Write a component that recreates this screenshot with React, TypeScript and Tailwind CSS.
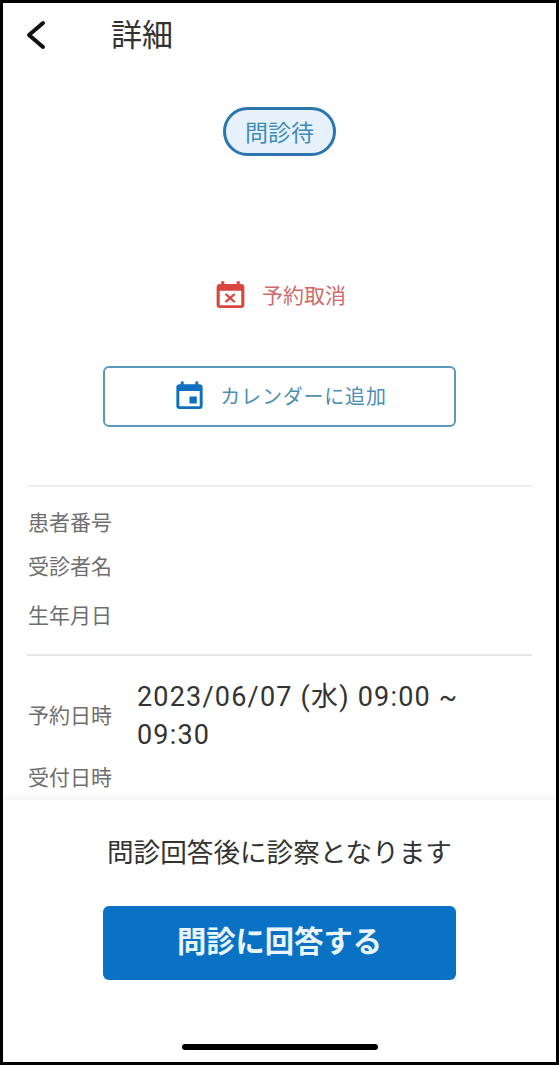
const jp = "font-['Roboto','Noto_Sans_CJK_JP',sans-serif]";

function InfoLabel({ children, className }: { children: string; className?: string }) {
  return <div className={`w-[84px] shrink-0 text-[21px] leading-[30px] text-[#6e6e6e] ${className ?? ""}`}>{children}</div>;
}

export default function App() {
  return (
    <div className={`${jp} box-border flex h-[1065px] w-[559px] flex-col overflow-hidden border-[3px] border-black bg-white`}>
      {/* header */}
      <div className="flex h-[64px] shrink-0 items-center pl-[22px]">
        <svg width="22" height="30" viewBox="0 0 22 30" fill="none" className="shrink-0">
          <path d="M18 3 L4 15 L18 27" stroke="#111" strokeWidth="4" strokeLinecap="round" strokeLinejoin="round" />
        </svg>
        <div className="ml-[64px] text-[31px] leading-none text-[#333]">詳細</div>
      </div>

      <div className="min-h-0 flex-1 overflow-hidden">
        <div className="mt-[40px] flex justify-center">
          <div className="flex h-[49px] w-[113px] items-center justify-center rounded-full border-[3px] border-[#2a76ad] bg-[#e6f1fb] pt-[4px] text-[23px] leading-none text-[#3f8cb8]">
            問診待
          </div>
        </div>

        {/* cancel */}
        <div className="mt-[124px] flex items-center justify-center gap-[13px] pr-[1px]">
          <svg width="37" height="32" viewBox="0 0 24 24" fill="#d9453f" preserveAspectRatio="none" className="shrink-0">
            <path d="M9.31 17l2.44-2.44L14.19 17l1.06-1.06-2.44-2.44 2.44-2.44L14.19 10l-2.44 2.44L9.31 10l-1.06 1.06 2.44 2.44-2.44 2.44L9.31 17zM19 3h-1V1h-2v2H8V1H6v2H5c-1.11 0-1.99.9-1.99 2L3 19c0 1.1.89 2 2 2h14c1.1 0 2-.9 2-2V5c0-1.1-.9-2-2-2zm0 16H5V8h14v11z" />
          </svg>
          <div className="text-[21px] leading-none text-[#cf6a68]">予約取消</div>
        </div>

        {/* calendar button */}
        <div className="mx-[100px] mt-[54px] flex h-[61px] items-center justify-center gap-[13px] rounded-[6px] border-2 border-[#5a9abf]">
          <svg width="35" height="33" viewBox="0 0 24 24" fill="#0f6fc0" preserveAspectRatio="none" className="shrink-0">
            <path d="M17 12h-5v5h5v-5zM16 1v2H8V1H6v2H5c-1.11 0-1.99.9-1.99 2L3 19c0 1.1.89 2 2 2h14c1.1 0 2-.9 2-2V5c0-1.1-.9-2-2-2h-1V1h-2zm3 18H5V8h14v11z" />
          </svg>
          <div className="text-[20px] leading-none tracking-[0.8px] text-[#4d8fb3]">カレンダーに追加</div>
        </div>

        <div className="mx-[24px] mt-[58px] h-[2px] bg-[#efefef]" />

        {/* patient */}
        <div className="mx-[25px] mt-[21px] flex flex-col">
          <InfoLabel>患者番号</InfoLabel>
          <InfoLabel className="mt-[14px]">受診者名</InfoLabel>
          <InfoLabel className="mt-[19px]">生年月日</InfoLabel>
        </div>

        <div className="mx-[24px] mt-[23px] h-[2px] bg-[#e6e6e6]" />

        {/* reservation */}
        <div className="mx-[25px] mt-[22px] flex items-center gap-[25px]">
          <InfoLabel>予約日時</InfoLabel>
          <div className="w-[345px] text-[27px] leading-[38px] tracking-[1.2px] text-[#333]">
            2023/06/07 (水) 09:00 ~ 09:30
          </div>
        </div>
        <div className="mx-[25px] mt-[9px]">
          <InfoLabel>受付日時</InfoLabel>
        </div>
      </div>

      {/* footer */}
      <div className="relative flex h-[262px] shrink-0 flex-col items-center bg-white pt-[34px] shadow-[0_-3px_6px_rgba(0,0,0,0.05)]">
        <div className="text-[26.6px] leading-[38px] text-[#333]">問診回答後に診察となります</div>
        <button className="mt-[34px] h-[74px] w-[353px] shrink-0 rounded-[6px] bg-[#0a72c4] text-[29.3px] font-bold text-[#e9f4fb]">
          問診に回答する
        </button>
        <div className="mt-auto mb-[12px] h-[6px] w-[196px] rounded-full bg-black" />
      </div>
    </div>
  );
}
